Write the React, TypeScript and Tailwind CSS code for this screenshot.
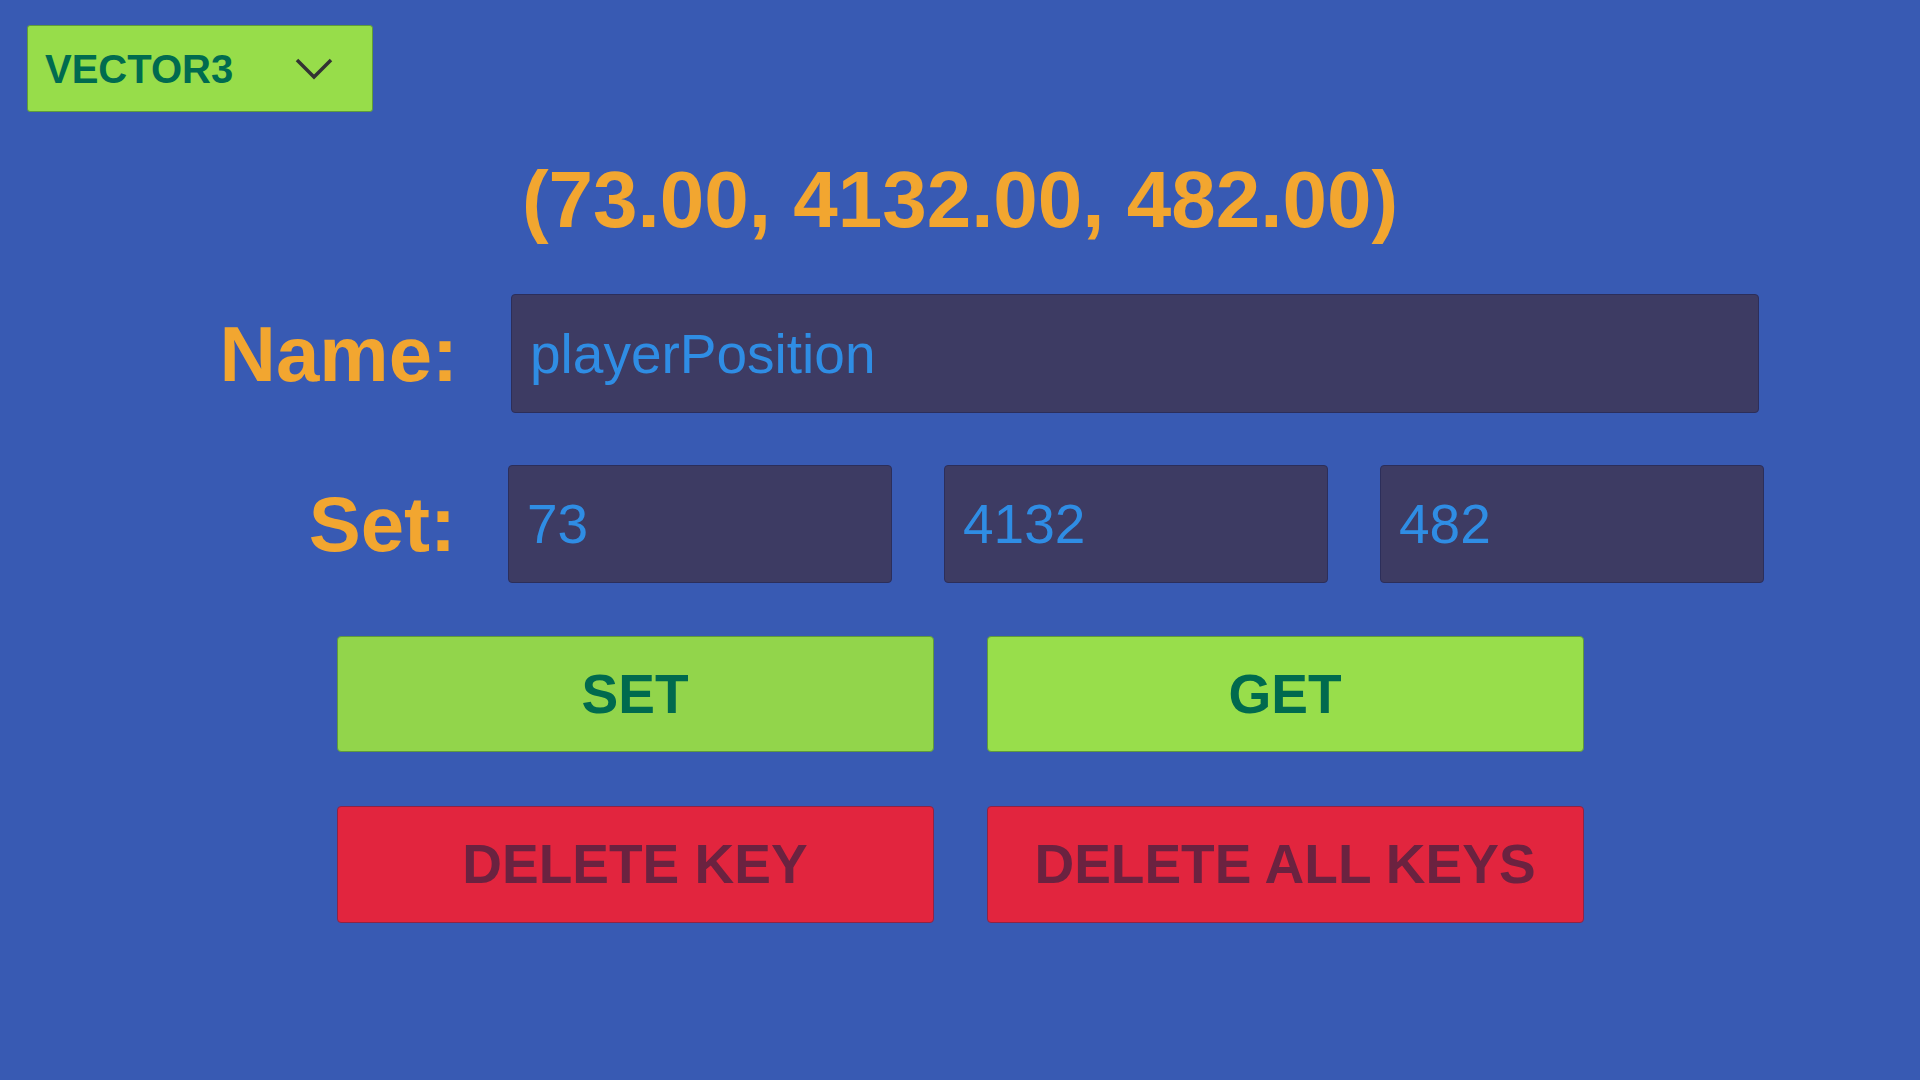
import { useState } from 'react'

const ValueField = ({ value, width }: { value: string; width: string }) => (
  <div className={`${width} h-full rounded-[4px] border border-[#2c2e5a] bg-[#3d3b63]`}>
    <input
      defaultValue={value}
      className="h-full w-full bg-transparent pl-[18px] text-[55px] text-[#2f8de4] outline-none"
    />
  </div>
)

const App = () => {
  const [type] = useState('VECTOR3')
  const values = ['73', '4132', '482']

  return (
    <div className="h-[1080px] w-[1920px] overflow-hidden bg-[#385ab3] font-['Liberation_Sans',Arial,sans-serif]">
      {/* Type dropdown */}
      <div className="pl-[27px] pt-[25px]">
        <button className="flex h-[87px] w-[346px] items-center justify-between rounded-[3px] border border-[#5f9c3a] bg-[#97dd4a] pl-[17px] pr-[39px]">
          <span className="text-[40px] font-bold leading-none text-[#006b4f]">{type}</span>
          <svg width="38" height="22" viewBox="0 0 38 22" fill="none">
            <polyline points="2,2 19,19 36,2" stroke="#333333" strokeWidth="3.5" />
          </svg>
        </button>
      </div>

      {/* Current value */}
      <div className="mt-[48px] text-center text-[80px] font-bold leading-[80px] text-[#f2a630]">
        (73.00, 4132.00, 482.00)
      </div>

      {/* Name row */}
      <div className="mt-[54px] flex h-[119px] items-center">
        <div className="w-[458px] text-right text-[78px] font-bold leading-[78px] text-[#f2a630]">Name:</div>
        <div className="ml-[53px] h-full">
          <ValueField value="playerPosition" width="w-[1248px]" />
        </div>
      </div>

      {/* Set row */}
      <div className="mt-[52px] flex h-[118px] items-center">
        <div className="w-[456px] text-right text-[78px] font-bold leading-[78px] text-[#f2a630]">Set:</div>
        <div className="ml-[52px] flex h-full gap-[52px]">
          {values.map((v) => (
            <ValueField key={v} value={v} width="w-[384px]" />
          ))}
        </div>
      </div>

      {/* Actions */}
      <div className="mt-[53px] flex justify-center gap-[53px]">
        <button className="h-[116px] w-[597px] rounded-[4px] border border-[#5f9a3c] bg-[#92d54b] text-[55px] font-bold text-[#006a4e]">
          SET
        </button>
        <button className="h-[116px] w-[597px] rounded-[4px] border border-[#5f9a3c] bg-[#98de4b] text-[55px] font-bold text-[#006a4e]">
          GET
        </button>
      </div>
      <div className="mt-[54px] flex justify-center gap-[53px]">
        <button className="h-[117px] w-[597px] rounded-[4px] border border-[#8c2447] bg-[#e2253e] text-[55px] font-bold text-[#6b2240]">
          DELETE KEY
        </button>
        <button className="h-[117px] w-[597px] rounded-[4px] border border-[#8c2447] bg-[#e2253e] text-[55px] font-bold text-[#6b2240]">
          DELETE ALL KEYS
        </button>
      </div>
    </div>
  )
}

export default App
